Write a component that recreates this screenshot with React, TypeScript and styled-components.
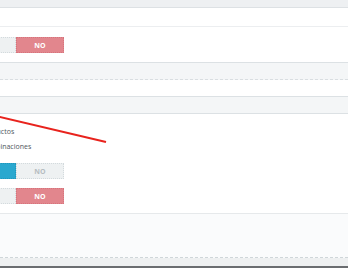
import React from "react";
import styled, { createGlobalStyle } from "styled-components";

const Global = createGlobalStyle`
  html, body { margin: 0; padding: 0; background: #ffffff; }
  body { width: 348px; height: 268px; overflow: hidden; font-family: "Open Sans", "Liberation Sans", sans-serif; }
  #root { width: 348px; height: 268px; }
`;

const Page = styled.div`
  position: relative;
  width: 348px;
  height: 268px;
  overflow: hidden;
  display: flex;
  flex-direction: column;
  background: #ffffff;
`;

const TopBand = styled.div`
  flex: none;
  height: 7px;
  background: #eef0f2;
  border-bottom: 1px solid #dde1e4;
`;

const EmptyRow = styled.div<{ $h: number; $line?: boolean }>`
  flex: none;
  height: ${(p) => p.$h}px;
  border-bottom: ${(p) => (p.$line ? "1px solid #eceef0" : "none")};
`;

const FieldRow = styled.div<{ $pt: number; $pb: number }>`
  flex: none;
  padding: ${(p) => p.$pt}px 0 ${(p) => p.$pb}px;
  display: flex;
  flex-direction: column;
`;

const Band = styled.div<{ $dashed?: boolean }>`
  flex: none;
  height: 16px;
  background: #f4f6f7;
  border-top: 1px solid #dce1e4;
  border-bottom: 1px ${(p) => (p.$dashed ? "dashed #d9dee1" : "solid #dce1e4")};
`;

const Content = styled.div`
  flex: none;
  box-sizing: border-box;
  height: 100px;
  display: flex;
  flex-direction: column;
  margin-left: -32px;
  padding-top: 10px;
  border-bottom: 1px solid #e6e9eb;
`;

const Choice = styled.label`
  flex: none;
  display: flex;
  align-items: center;
  height: 15px;
  padding-left: 13px;
  font-size: 7px;
  color: #50575b;
  white-space: nowrap;
`;

const Switch = styled.div<{ $mt: number }>`
  flex: none;
  display: flex;
  width: 96px;
  height: 16px;
  margin-top: ${(p) => p.$mt}px;
`;

const Half = styled.span<{ $tone: "off" | "yes" | "no" }>`
  flex: 0 0 48px;
  box-sizing: border-box;
  display: flex;
  align-items: center;
  justify-content: center;
  font-size: 7px;
  font-weight: 700;
  letter-spacing: 0.1px;
  color: ${(p) => (p.$tone === "off" ? "#b6bdc1" : "#ffffff")};
  background: ${(p) =>
    p.$tone === "yes" ? "#2aa8cf" : p.$tone === "no" ? "#e2868d" : "#eef1f2"};
  border: 1px dotted
    ${(p) => (p.$tone === "yes" ? "#2296bb" : p.$tone === "no" ? "#d6747c" : "#d3dadd")};
`;

const SwitchIndent = styled.div`
  margin-left: -32px;
`;

const Footer = styled.div`
  flex: none;
  height: 43px;
  background: #fafbfc;
  border-bottom: 1px dashed #cfd6d9;
`;

const BottomBand = styled.div`
  flex: none;
  height: 8px;
  background: #eef0f1;
  border-bottom: 2px solid #6a6d70;
`;

const Annotation = styled.svg`
  position: absolute;
  left: 0;
  top: 0;
  pointer-events: none;
`;

export default function App() {
  return (
    <>
      <Global />
      <Page>
        <TopBand />
        <EmptyRow $h={18} $line />
        <FieldRow $pt={10} $pb={9}>
          <SwitchIndent>
            <Switch $mt={0}>
              <Half $tone="off">SÍ</Half>
              <Half $tone="no">NO</Half>
            </Switch>
          </SwitchIndent>
        </FieldRow>
        <Band $dashed />
        <EmptyRow $h={16} />
        <Band />
        <Content>
          <Choice>Productos</Choice>
          <Choice>Combinaciones</Choice>
          <Switch $mt={9}>
            <Half $tone="yes">SÍ</Half>
            <Half $tone="off">NO</Half>
          </Switch>
          <Switch $mt={9}>
            <Half $tone="off">SÍ</Half>
            <Half $tone="no">NO</Half>
          </Switch>
        </Content>
        <Footer />
        <BottomBand />
        <Annotation width="348" height="268" viewBox="0 0 348 268">
          <line x1="-2" y1="116.5" x2="106" y2="142" stroke="#e8231d" strokeWidth="2" />
        </Annotation>
      </Page>
    </>
  );
}
